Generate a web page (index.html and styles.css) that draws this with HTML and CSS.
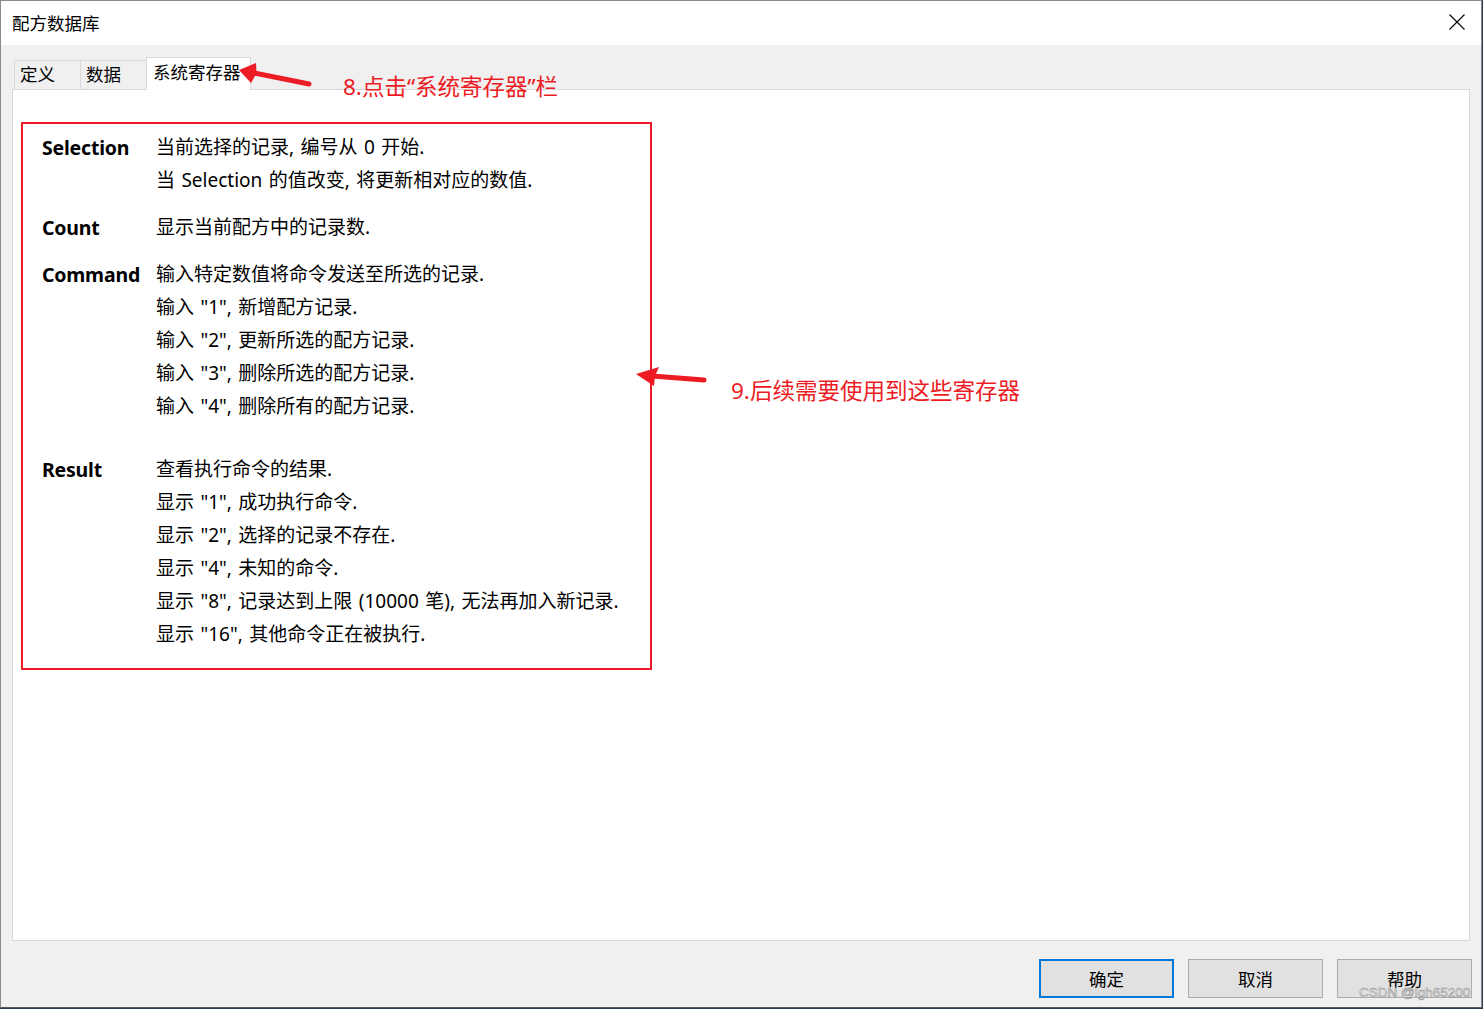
FILE: index.html
```html
<!DOCTYPE html>
<html lang="zh-CN">
<head>
<meta charset="utf-8">
<title>配方数据库</title>
<link rel="stylesheet" href="styles.css">
</head>
<body>
<div class="window">
  <div class="titlebar">
    <span class="title">配方数据库</span>
    <svg class="close" width="16" height="16" viewBox="0 0 16 16"><path d="M0.5 0.5 L15.5 15.5 M15.5 0.5 L0.5 15.5" stroke="#000" stroke-width="1.1" fill="none"/></svg>
  </div>
  <div class="client">
    <div class="tabs">
      <div class="tab t1">定义</div>
      <div class="tab t2">数据</div>
      <div class="tab active">系统寄存器</div>
    </div>
    <div class="panel">
      <div class="redbox">
        <div class="row">
          <div class="label">Selection</div>
          <div class="desc">
            <div class="line">当前选择的记录, 编号从 0 开始.</div>
            <div class="line">当 Selection 的值改变, 将更新相对应的数值.</div>
          </div>
        </div>
        <div class="row">
          <div class="label">Count</div>
          <div class="desc">
            <div class="line">显示当前配方中的记录数.</div>
          </div>
        </div>
        <div class="row wide">
          <div class="label">Command</div>
          <div class="desc">
            <div class="line">输入特定数值将命令发送至所选的记录.</div>
            <div class="line">输入 &quot;1&quot;, 新增配方记录.</div>
            <div class="line">输入 &quot;2&quot;, 更新所选的配方记录.</div>
            <div class="line">输入 &quot;3&quot;, 删除所选的配方记录.</div>
            <div class="line">输入 &quot;4&quot;, 删除所有的配方记录.</div>
          </div>
        </div>
        <div class="row last">
          <div class="label">Result</div>
          <div class="desc">
            <div class="line">查看执行命令的结果.</div>
            <div class="line">显示 &quot;1&quot;, 成功执行命令.</div>
            <div class="line">显示 &quot;2&quot;, 选择的记录不存在.</div>
            <div class="line">显示 &quot;4&quot;, 未知的命令.</div>
            <div class="line">显示 &quot;8&quot;, 记录达到上限 (10000 笔), 无法再加入新记录.</div>
            <div class="line">显示 &quot;16&quot;, 其他命令正在被执行.</div>
          </div>
        </div>
      </div>
    </div>
    <div class="buttons">
      <div class="btn default">确定</div>
      <div class="btn">取消</div>
      <div class="btn">帮助</div>
    </div>
  </div>
  <div class="note note1">8.点击“系统寄存器”栏</div>
  <div class="note note2">9.后续需要使用到这些寄存器</div>
  <svg class="arrows" width="1483" height="1009" viewBox="0 0 1483 1009">
    <line x1="309" y1="84" x2="254" y2="73" stroke="#ed1c24" stroke-width="5" stroke-linecap="round"/>
    <path d="M239 70 L256 63 L256.5 73.5 L251 83 Z" fill="#ed1c24"/>
    <line x1="704" y1="380" x2="652" y2="376" stroke="#ed1c24" stroke-width="5" stroke-linecap="round"/>
    <path d="M636 374 L659 367 L655 376 L654 386 Z" fill="#ed1c24"/>
  </svg>
  <div class="watermark">CSDN @lgh65200</div>
</div>
</body>
</html>
```
FILE: styles.css
```css
html, body {
  margin: 0;
  padding: 0;
}
body {
  width: 1483px;
  height: 1009px;
  background: #2b3a4f;
  overflow: hidden;
  font-family: "Noto Sans", "Noto Sans CJK SC", sans-serif;
  color: #000;
}
.window {
  position: relative;
  width: 1480px;
  height: 1006px;
  border: 1px solid #8a8a8a;
  border-bottom: 1px solid #5a5a5a;
  background: #f0f0f0;
  display: flex;
  flex-direction: column;
}
.titlebar {
  height: 44px;
  background: #fff;
  display: flex;
  align-items: center;
  justify-content: space-between;
  padding: 0 16px 0 11px;
}
.title {
  font-family: "Noto Sans CJK SC", sans-serif;
  font-size: 17.5px;
  line-height: 1;
}
.close {
  display: block;
  margin-top: -2px;
}
.client {
  flex: 1;
  display: flex;
  flex-direction: column;
  padding: 0 11px 0 11px;
}
.tabs {
  display: flex;
  align-items: flex-end;
  padding: 12px 0 0 2px;
  height: 32px;
  position: relative;
  z-index: 2;
}
.tab {
  font-family: "Noto Sans CJK SC", sans-serif;
  font-size: 17.5px;
  line-height: 1;
  height: 29px;
  box-sizing: border-box;
  border: 1px solid #d9d9d9;
  border-bottom: none;
  background: #f0f0f0;
  display: flex;
  align-items: center;
  padding: 0 0 2px 5px;
}
.t1 { width: 66px; border-right: none; }
.t2 { width: 66px; border-right: none; }
.tab.active {
  width: 105px;
  height: 33px;
  background: #fff;
  padding: 0 0 4px 6px;
  margin-bottom: -1px;
}
.panel {
  height: 852px;
  box-sizing: border-box;
  background: #fff;
  border: 1px solid #d9d9d9;
  padding: 32px 0 0 8px;
  position: relative;
  z-index: 1;
}
.redbox {
  width: 631px;
  height: 548px;
  box-sizing: border-box;
  border: 2px solid #ed1c24;
  padding: 7px 0 0 19px;
}
.row {
  display: grid;
  grid-template-columns: 114px auto;
  margin-bottom: 14px;
}
.row.wide { margin-bottom: 30px; }
.label {
  font-family: "Noto Sans", sans-serif;
  font-weight: 700;
  font-size: 19.5px;
  line-height: 33px;
  letter-spacing: -0.2px;
}
.line {
  font-size: 19px;
  line-height: 33px;
  white-space: nowrap;
  word-spacing: 1.5px;
}
.buttons {
  display: flex;
  justify-content: flex-end;
  gap: 14px;
  padding: 18px 0 0 0;
  margin-right: -2px;
}
.btn {
  width: 135px;
  height: 39px;
  box-sizing: border-box;
  background: #e1e1e1;
  border: 1px solid #adadad;
  font-family: "Noto Sans CJK SC", sans-serif;
  font-size: 17.5px;
  display: flex;
  align-items: center;
  justify-content: center;
}
.btn.default {
  border: 2px solid #0078d7;
}
.note {
  position: absolute;
  color: #ed1c24;
  font-size: 22.5px;
  line-height: 1;
  white-space: nowrap;
  z-index: 6;
}
.note1 { left: 342px; top: 75px; }
.note2 { left: 730px; top: 379px; }
.arrows {
  position: absolute;
  left: -1px;
  top: -1px;
  pointer-events: none;
  z-index: 5;
}
.watermark {
  position: absolute;
  left: 1358px;
  top: 984px;
  font-family: "Liberation Sans", sans-serif;
  font-size: 13.5px;
  color: #f2f2f2;
  -webkit-text-stroke: 0.5px #8a8a8a;
  z-index: 6;
}
```
